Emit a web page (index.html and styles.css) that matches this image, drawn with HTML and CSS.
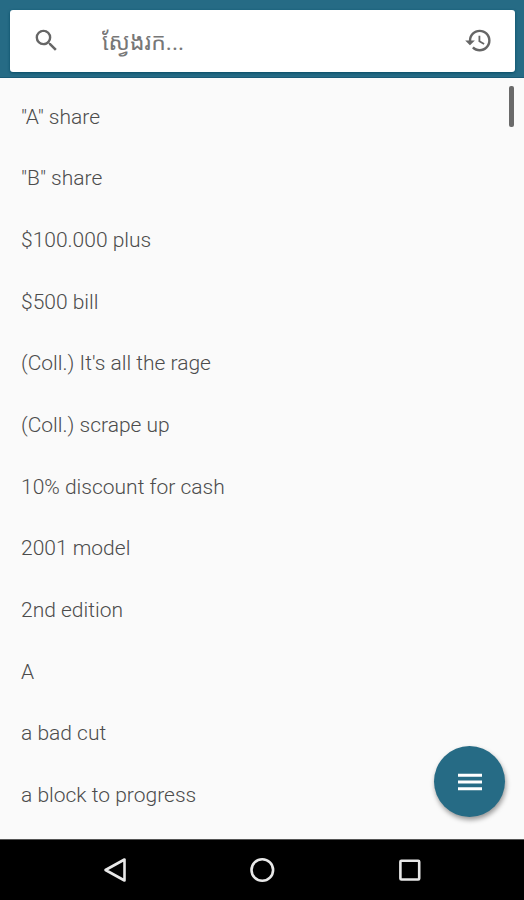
FILE: index.html
```html
<!DOCTYPE html>
<html lang="km">
<head>
<meta charset="utf-8">
<meta name="viewport" content="width=device-width, initial-scale=1">
<title>Dictionary</title>
<link rel="stylesheet" href="styles.css">
</head>
<body>
<header class="app-bar">
  <form class="search" role="search">
    <label class="search-label" for="q" aria-label="Search">
      <svg class="icon" viewBox="0 0 24 24" aria-hidden="true"><path d="M15.5 14h-.79l-.28-.27A6.47 6.47 0 0 0 16 9.5 6.5 6.5 0 1 0 9.5 16c1.61 0 3.09-.59 4.23-1.57l.27.28v.79l5 4.99L20.49 19l-4.99-5zm-6 0C7.01 14 5 11.99 5 9.5S7.01 5 9.5 5 14 7.01 14 9.5 11.99 14 9.5 14z"/></svg>
    </label>
    <input class="search-input" id="q" type="text" placeholder="ស្វែងរក...">
    <button class="icon-button" type="button" aria-label="History">
      <svg class="icon" viewBox="0 0 24 24" aria-hidden="true"><path d="M13 3a9 9 0 0 0-9 9H1l3.89 3.89.07.14L9 12H6c0-3.87 3.13-7 7-7s7 3.13 7 7-3.13 7-7 7c-1.93 0-3.68-.79-4.94-2.06l-1.42 1.42A8.95 8.95 0 0 0 13 21a9 9 0 0 0 0-18zm-1 5v5l4.28 2.54.72-1.21-3.5-2.08V8H12z"/></svg>
    </button>
  </form>
</header>
<main class="content">
  <ul class="words" lang="en">
    <li class="word">"A" share</li>
    <li class="word">"B" share</li>
    <li class="word">$100.000 plus</li>
    <li class="word">$500 bill</li>
    <li class="word">(Coll.) It's all the rage</li>
    <li class="word">(Coll.) scrape up</li>
    <li class="word">10% discount for cash</li>
    <li class="word">2001 model</li>
    <li class="word">2nd edition</li>
    <li class="word">A</li>
    <li class="word">a bad cut</li>
    <li class="word">a block to progress</li>
  </ul>
  <div class="scroll-thumb"></div>
  <button class="fab" type="button" aria-label="Menu">
    <svg class="fab-icon" viewBox="0 0 24 24" aria-hidden="true"><path d="M3 18.2h18v-2.3H3zm0-5h18v-2.4H3zm0-7.4v2.3h18V5.8z"/></svg>
  </button>
</main>
<nav class="system-nav">
  <button class="nav-button" type="button" aria-label="Back"><svg class="nav-icon" viewBox="0 0 28 28" aria-hidden="true"><path d="M23.500 3.500v21L4.500 14z"/></svg></button>
  <button class="nav-button" type="button" aria-label="Home"><svg class="nav-icon" viewBox="0 0 28 28" aria-hidden="true"><circle cx="14.300" cy="14" r="10.800"/></svg></button>
  <button class="nav-button" type="button" aria-label="Recent apps"><svg class="nav-icon" viewBox="0 0 28 28" aria-hidden="true"><rect x="5.400" y="4.700" width="18.800" height="18.800" rx="1"/></svg></button>
</nav>
</body>
</html>
```
FILE: styles.css
```css
* {
  box-sizing: border-box;
}

body {
  margin: 0;
  min-height: 100vh;
  display: flex;
  flex-direction: column;
  background: #fafafa;
  color: #666;
  font-family: Roboto, "Noto Sans Khmer", "Noto Sans", sans-serif;
  font-size: 21px;
}

button {
  border: 0;
  padding: 0;
  background: none;
  color: inherit;
  display: flex;
  align-items: center;
  justify-content: center;
}

svg {
  display: block;
  fill: currentColor;
}

.app-bar {
  padding: 10px 9px 5px 10px;
  background: #266b85;
  border-bottom: 1px solid #1a5a75;
}

.search {
  display: flex;
  align-items: center;
  height: 62px;
  padding: 0 22px 2px;
  background: #fff;
  border-radius: 3px;
  box-shadow: 0 1px 3px #064a64;
}

.search-label {
  margin-right: 41px;
}

.icon {
  width: 29px;
  height: 29px;
}

.search-input {
  flex: 1;
  min-width: 0;
  padding: 5px 0 0;
  border: 0;
  outline: 0;
  background: none;
  color: inherit;
  font: inherit;
  font-size: 23px;
  line-height: 40px;
}

.search-input::placeholder {
  color: #777;
  opacity: 1;
}

.content {
  position: relative;
  flex: 1;
  display: flex;
}

.words {
  flex: 1;
  display: grid;
  grid-auto-rows: 1fr;
  margin: 0;
  padding: 8px 21px 13px;
  list-style: none;
  color: #4c4c4c;
  font-weight: 300;
}

.word {
  display: flex;
  align-items: center;
}

.scroll-thumb {
  position: absolute;
  top: 8px;
  right: 10px;
  width: 5px;
  height: 41px;
  border-radius: 2px;
  background: #6a6a6a;
}

.fab {
  position: absolute;
  right: 19px;
  bottom: 22px;
  width: 71px;
  height: 71px;
  border-radius: 50%;
  background: #266b85;
  color: #fff;
  box-shadow: 1px 3px 5px rgba(0, 0, 0, 0.4);
}

.fab-icon {
  width: 32px;
  height: 32px;
}

.system-nav {
  display: flex;
  justify-content: center;
  height: 61px;
  border-top: 1px solid #555;
  background: #000;
  color: #e8e8e8;
}

.nav-button {
  flex: 0 1 28%;
}

.nav-icon {
  width: 28px;
  height: 28px;
  fill: none;
  stroke: currentColor;
  stroke-width: 2.6;
  stroke-linejoin: round;
}
```
